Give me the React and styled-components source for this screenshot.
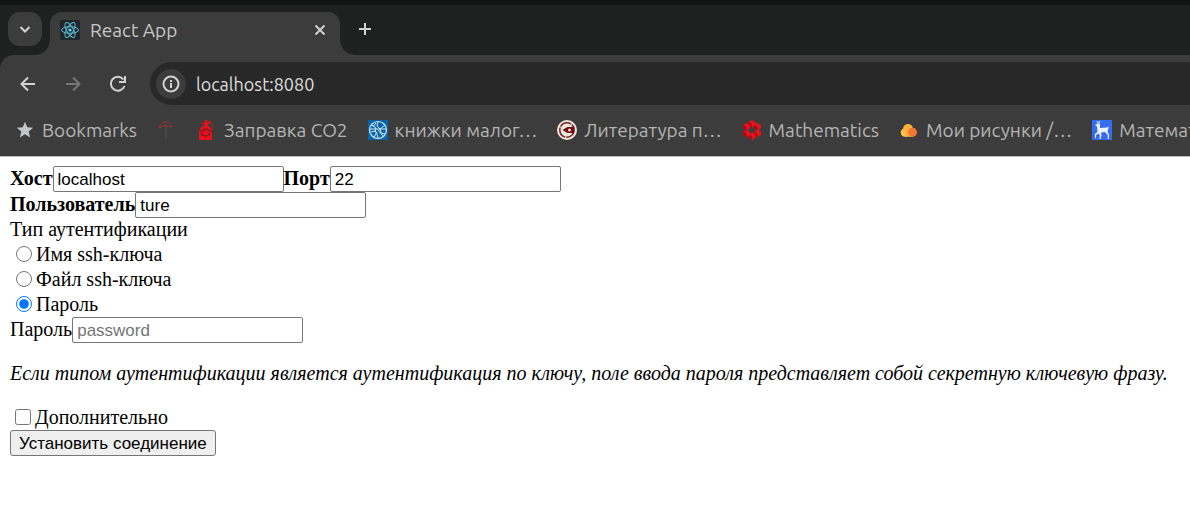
import React, { useState } from "react";
import styled, { createGlobalStyle } from "styled-components";

const Global = createGlobalStyle`
  *, *::before, *::after { box-sizing: border-box; }
  body { margin: 0; background: #fff; color: #000; }
`;

const Chrome = styled.header`
  font-family: Ubuntu, "Noto Sans", sans-serif;
  background: #1f2120;
  color: #c7c7c7;
  border-top: 5px solid #131313;
  border-bottom: 1px solid #bdbdbd;
  overflow: hidden;
`;

const TabStrip = styled.div`
  display: flex;
  height: 50px;
  padding: 7px 8px 0;
`;

const IconButton = styled.button`
  display: grid;
  place-items: center;
  flex: none;
  width: ${(p) => p.$size || 34}px;
  height: ${(p) => p.$size || 34}px;
  padding: 0;
  border: 0;
  border-radius: ${(p) => p.$radius || 17}px;
  background: ${(p) => p.$bg || "transparent"};
  color: ${(p) => p.$color || "#d2d2d2"};
`;

const Tab = styled.div`
  position: relative;
  display: flex;
  align-items: center;
  width: 290px;
  height: 43px;
  margin: 0 8px;
  padding: 0 3px 8px 10px;
  border-radius: 12px 12px 0 0;
  background: #3c3c3c;
  font-size: 19px;
  line-height: 24px;

  &::before, &::after {
    content: "";
    position: absolute;
    bottom: 0;
    width: 14px;
    height: 14px;
  }
  &::before {
    right: 100%;
    background: radial-gradient(circle at 0 0, transparent 13px, #3c3c3c 14px);
  }
  &::after {
    left: 100%;
    background: radial-gradient(circle at 100% 0, transparent 13px, #3c3c3c 14px);
  }
`;

const TabTitle = styled.span`
  flex: 1;
  padding-left: 10px;
`;

const Toolbar = styled.div`
  display: flex;
  align-items: center;
  gap: 11px;
  height: 50px;
  padding: 7px 0 0 11px;
  border-radius: 14px 0 0 0;
  background: #3c3c3c;
`;

const AddressBar = styled.div`
  display: flex;
  align-items: center;
  flex: 1;
  gap: 10px;
  height: 43px;
  margin-left: 4px;
  padding-left: 6px;
  border-radius: 22px 0 0 22px;
  background: #282828;
`;

const Address = styled.input`
  flex: 1;
  min-width: 0;
  padding: 0;
  border: 0;
  outline: 0;
  background: transparent;
  color: #dedede;
  font: 18px/24px Ubuntu, "Noto Sans", sans-serif;
`;

const Bookmarks = styled.nav`
  display: flex;
  align-items: center;
  gap: 20px;
  height: 51px;
  padding: 0 0 2px 15px;
  background: #3c3c3c;
`;

const Bookmark = styled.a`
  display: flex;
  align-items: center;
  flex: none;
  gap: 7px;
  color: #b4b4b4;
  font-size: 19px;
  line-height: 24px;
  text-decoration: none;
  white-space: nowrap;
`;

const Form = styled.form`
  padding: 9px 10px;
  font: 20px/22px "Liberation Serif", "Times New Roman", serif;
`;

const Row = styled.div`
  display: flex;
  align-items: center;
  min-height: ${(p) => p.$height || 26}px;
`;

const Label = styled.label`
  padding-bottom: 2px;
  font-weight: ${(p) => (p.$bold ? 700 : 400)};
`;

const Field = styled.input`
  width: 231px;
  height: 26px;
  margin: 0;
  padding: 2px 4px 0;
  border: 1px solid #767676;
  border-radius: 2px;
  background: #fff;
  color: #000;
  font: 17px/20px "Liberation Sans", Arial, sans-serif;
  &::placeholder { color: #757575; }
`;

const Choice = styled.input`
  flex: none;
  width: 16px;
  height: 16px;
  margin: 0 4px 2px ${(p) => (p.type === "radio" ? 6 : 5)}px;
`;

const Note = styled.p`
  margin: 19px 0 21px;
  font-style: italic;
`;

const Submit = styled.button`
  height: 26px;
  padding: 1px 8px 0;
  border: 1px solid #767676;
  border-radius: 3px;
  background: #efefef;
  color: #000;
  font: 17px/20px "Liberation Sans", Arial, sans-serif;
`;

const Stroke = ({ size = 20, width = 2, children }) => (
  <svg width={size} height={size} viewBox="0 0 20 20" fill="none" stroke="currentColor" strokeWidth={width} aria-hidden="true">
    {children}
  </svg>
);

const Picture = ({ children, width = 20 }) => (
  <svg width={width} height="20" viewBox={`0 0 ${width} 20`} aria-hidden="true">{children}</svg>
);

const ReactIcon = () => (
  <Picture>
    <rect width="20" height="20" rx="2" fill="#20262a" />
    <g fill="none" stroke="#58bfd8">
      <ellipse cx="10" cy="10" rx="8.5" ry="3.3" />
      <ellipse cx="10" cy="10" rx="8.5" ry="3.3" transform="rotate(60 10 10)" />
      <ellipse cx="10" cy="10" rx="8.5" ry="3.3" transform="rotate(120 10 10)" />
    </g>
    <circle cx="10" cy="10" r="1.6" fill="#61dafb" />
  </Picture>
);

const Star = () => (
  <Picture>
    <path d="M10 1.8l2.3 5.4 5.9.5-4.5 3.9 1.4 5.8-5.1-3.1-5.1 3.1 1.4-5.8-4.5-3.9 5.9-.5z" fill="#c3c5c9" />
  </Picture>
);

const Umbrella = () => (
  <Picture>
    <path d="M9 1v17" stroke="#5b5050" />
    <path d="M2.5 8C3.500 4 6 2 9 2s4.500 2 6.500 4.500L12 6H6z" fill="none" stroke="#963237" />
  </Picture>
);

const Extinguisher = () => (
  <Picture>
    <path d="M8 0h2v2l4-1v2l-3 1v2l2 1 2 3v10H2V11l2-4 3-1V4H4V3h4z" fill="#e9101b" />
    <path d="M13 2c3 1 3 4 2 7" fill="none" stroke="#c3141d" />
    <path d="M3 11h3l2-2h2l2 2h3M4 13c2 4 7 4 9 0" fill="none" stroke="#5a2225" strokeWidth="1.200" />
  </Picture>
);

const Wheel = () => (
  <Picture>
    <rect width="20" height="20" fill="#0864a8" />
    <g fill="none" stroke="#d5e8f3">
      <circle cx="10" cy="10" r="8.500" strokeWidth="1.200" />
      <path d="M2 9h16M3 12l4-1 2 3 1 4M10 2l-1 4 3 3 5-4M4 5l4 3-1 4M10 10l5 6M12 9l1 4 4 1M6 17l3-5M5 7l3-4" />
    </g>
  </Picture>
);

const Seal = () => (
  <Picture>
    <circle cx="10" cy="10" r="10" fill="#eee8dd" />
    <circle cx="10" cy="10" r="7.200" fill="none" stroke="#782126" strokeWidth="1.500" strokeDasharray="12 1" />
    <path d="M5.500 10l5-3h5l1.500-1v8l-1.500-1h-5z" fill="#780b12" />
    <circle cx="12.500" cy="10" r="1.500" fill="#eee8dd" />
  </Picture>
);

const Cubes = () => (
  <Picture>
    {[[10, 3.5], [15.5, 6.5], [15.5, 13], [10, 16], [4.5, 13], [4.5, 6.5]].map(([x, y]) => (
      <g key={`${x}-${y}`} transform={`translate(${x} ${y})`}>
        <path d="M0-3.500l3.500 2v3.500L0 4l-3.500-2v-3.500z" fill="#e11420" />
        <path d="M0 .5V4l-3.500-2v-3.500z" fill="#a80b14" />
      </g>
    ))}
  </Picture>
);

const Cloud = () => (
  <Picture>
    <circle cx="6" cy="12.500" r="4.300" fill="#ffc34b" />
    <circle cx="9" cy="9" r="5" fill="#ffb23a" />
    <path d="M6 16.800h8V9H6z" fill="#ffb23a" />
    <circle cx="13.500" cy="12.300" r="4.500" fill="#f47732" />
  </Picture>
);

const Deer = () => (
  <Picture>
    <rect width="20" height="20" fill="#356cf0" />
    <path d="M5 1l1.500 3M8 1L6.500 4" fill="none" stroke="#edf3ff" />
    <path d="M3 5l3-1.500 2 1V8l7-.5 2-1-1 3-.5 2 1.500 3.500V19h-1.200v-4L13 12l-4 .5.5 3L8.500 19H7.300l.7-3.500-1.500-2L4 15v3H3v-4l2.500-2L5 6.500z" fill="#edf3ff" />
  </Picture>
);

const links = [
  { label: "Bookmarks", icon: <Star /> },
  { label: "", name: "Umbrella", icon: <Umbrella /> },
  { label: "Заправка CO2", icon: <Extinguisher /> },
  { label: "книжки малог…", icon: <Wheel /> },
  { label: "Литература п…", icon: <Seal /> },
  { label: "Mathematics", icon: <Cubes /> },
  { label: "Мои рисунки /…", icon: <Cloud /> },
  { label: "Математика", icon: <Deer /> },
];

const methods = ["Имя ssh-ключа", "Файл ssh-ключа", "Пароль"];

function Browser() {
  return (
    <Chrome>
      <TabStrip>
        <IconButton $radius={12} $bg="#3c3c3c" aria-label="Search tabs">
          <Stroke><path d="M5.500 8l4.500 4.500L14.500 8" /></Stroke>
        </IconButton>
        <Tab>
          <ReactIcon />
          <TabTitle>React App</TabTitle>
          <IconButton aria-label="Close tab"><Stroke><path d="M5.500 5.500l9 9M14.500 5.500l-9 9" /></Stroke></IconButton>
        </Tab>
        <IconButton aria-label="New tab"><Stroke><path d="M10 4v12M4 10h12" /></Stroke></IconButton>
      </TabStrip>
      <Toolbar>
        <IconButton aria-label="Back"><Stroke><path d="M17 10H4M10 3.500L3.500 10l6.500 6.500" /></Stroke></IconButton>
        <IconButton $color="#777" aria-label="Forward"><Stroke><path d="M3 10h13M10 3.500l6.500 6.500-6.500 6.500" /></Stroke></IconButton>
        <IconButton aria-label="Reload"><Stroke><path d="M16.500 12A7 7 0 1 1 15.500 5.500M17 2v6h-6" /></Stroke></IconButton>
        <AddressBar>
          <IconButton $size={30} $bg="#3c3c3c" aria-label="Site information">
            <Stroke><circle cx="10" cy="10" r="7.500" /><path d="M10 9v5M10 6v2" /></Stroke>
          </IconButton>
          <Address aria-label="Address" defaultValue="localhost:8080" />
        </AddressBar>
      </Toolbar>
      <Bookmarks>
        {links.map((l) => (
          <Bookmark key={l.label} href="#" aria-label={l.name}>{l.icon}{l.label && <span>{l.label}</span>}</Bookmark>
        ))}
      </Bookmarks>
    </Chrome>
  );
}

export default function App() {
  const [method, setMethod] = useState(2);
  return (
    <>
      <Global />
      <Browser />
      <Form onSubmit={(e) => e.preventDefault()}>
        <Row>
          <Label $bold htmlFor="host">Хост</Label><Field id="host" defaultValue="localhost" />
          <Label $bold htmlFor="port">Порт</Label><Field id="port" defaultValue="22" />
        </Row>
        <Row>
          <Label $bold htmlFor="user">Пользователь</Label><Field id="user" defaultValue="ture" />
        </Row>
        <Row $height={24}><Label as="span" id="auth">Тип аутентификации</Label></Row>
        <div role="radiogroup" aria-labelledby="auth">
          {methods.map((m, i) => (
            <Row $height={25} key={m}>
              <Choice type="radio" name="auth" id={`auth-${i}`} checked={method === i} onChange={() => setMethod(i)} />
              <Label htmlFor={`auth-${i}`}>{m}</Label>
            </Row>
          ))}
        </div>
        <Row>
          <Label htmlFor="password">Пароль</Label><Field id="password" type="password" placeholder="password" />
        </Row>
        <Note>Если типом аутентификации является аутентификация по ключу, поле ввода пароля представляет собой секретную ключевую фразу.</Note>
        <Row $height={25}>
          <Choice type="checkbox" id="more" /><Label htmlFor="more">Дополнительно</Label>
        </Row>
        <Submit>Установить соединение</Submit>
      </Form>
    </>
  );
}
